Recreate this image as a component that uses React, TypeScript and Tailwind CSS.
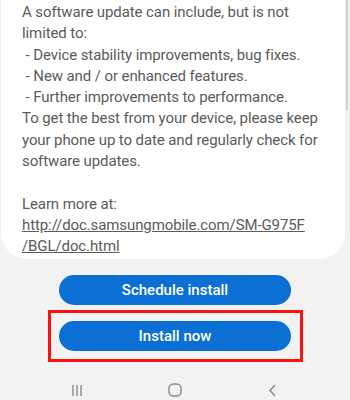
import React from "react";

export default function App() {
  return (
    <div className="w-[350px] h-[400px] bg-[#f2f2f2] overflow-hidden relative" style={{ fontFamily: "Roboto, 'Liberation Sans', sans-serif" }}>
      <div className="ml-[1px] mr-[5px] h-[259px] bg-white rounded-b-[26px] pl-[21px] pr-2 pt-[2px] text-[15px] leading-[21.3px] text-[#5b5b5b] tracking-[-0.1px]">
        <p>A software update can include, but is not</p>
        <p>limited to:</p>
        <p>&nbsp;- Device stability improvements, bug fixes.</p>
        <p>&nbsp;- New and / or enhanced features.</p>
        <p>&nbsp;- Further improvements to performance.</p>
        <p>To get the best from your device, please keep</p>
        <p>your phone up to date and regularly check for</p>
        <p>software updates.</p>
        <p>&nbsp;</p>
        <p>Learn more at:</p>
        <p className="underline">http://doc.samsungmobile.com/SM-G975F</p>
        <p className="underline">/BGL/doc.html</p>
      </div>
      <div className="absolute right-[2px] top-0 w-[2px] h-[110px] bg-[#d0d0d0]" />
      <div className="flex flex-col items-center mt-[16px]">
        <button className="w-[232px] h-[30px] rounded-full bg-[#0b6fd4] text-white text-[15px] font-medium">Schedule install</button>
        <div className="mt-[5px] w-[255px] h-[52px] border-[3px] border-[#ff1010] flex items-center justify-center">
          <button className="w-[232px] h-[30px] rounded-full bg-[#0b6fd4] text-white text-[15px] font-medium">Install now</button>
        </div>
      </div>
      <div className="absolute left-0 right-0 top-[380px] h-[20px] flex items-center justify-between px-[70px] text-[#7a7a7a]">
        <svg width="14" height="14" viewBox="0 0 14 14"><g stroke="#8a8a8a" strokeWidth="1.4"><line x1="3" y1="2" x2="3" y2="13"/><line x1="7" y1="2" x2="7" y2="13"/><line x1="11" y1="2" x2="11" y2="13"/></g></svg>
        <svg width="16" height="16" viewBox="0 0 16 16"><rect x="2" y="2" width="12" height="12" rx="4.5" fill="none" stroke="#8a8a8a" strokeWidth="1.5"/></svg>
        <svg width="14" height="14" viewBox="0 0 14 14"><polyline points="9,2 4,7.5 9,13" fill="none" stroke="#8a8a8a" strokeWidth="1.5"/></svg>
      </div>
    </div>
  );
}
